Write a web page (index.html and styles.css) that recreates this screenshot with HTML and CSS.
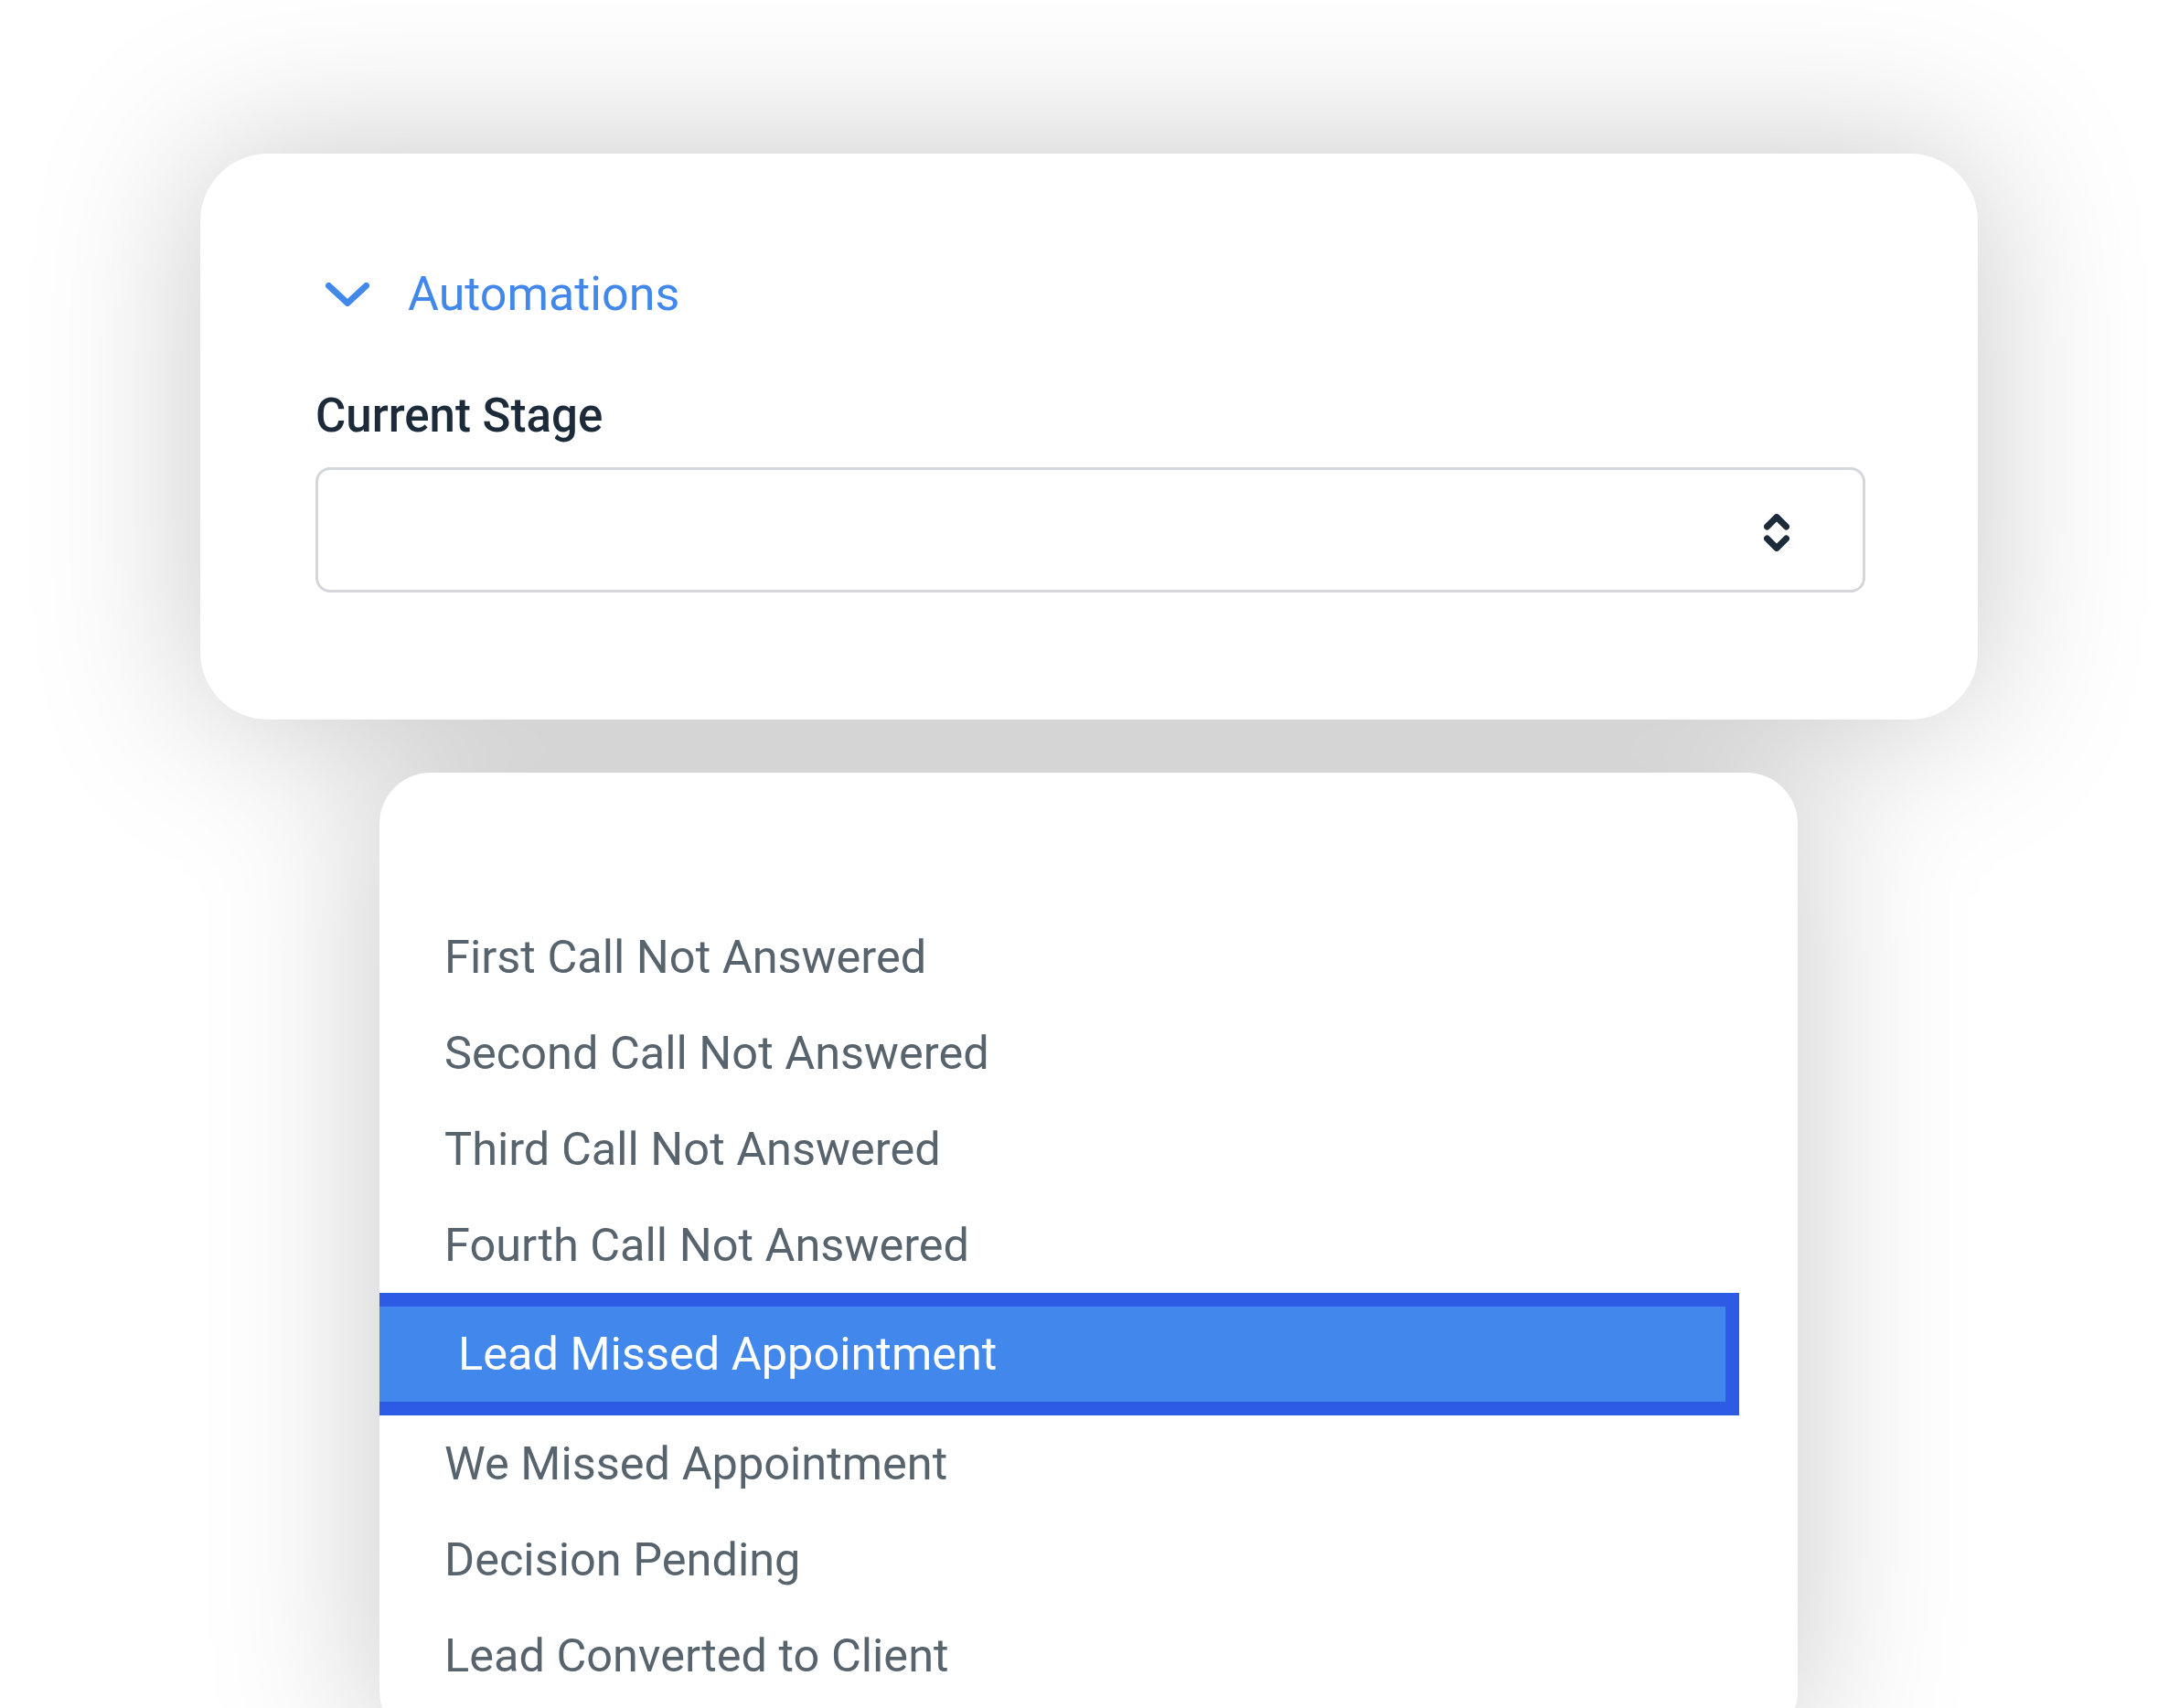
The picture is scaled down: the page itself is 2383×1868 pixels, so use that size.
FILE: index.html
```html
<!DOCTYPE html>
<html lang="en">
<head>
<meta charset="utf-8">
<title>Automations - Current Stage</title>
<link rel="stylesheet" href="styles.css">
</head>
<body>
<div class="stage">
  <section class="panel">
    <div class="panel-head">
      <svg class="chevron" width="48" height="26" viewBox="0 0 48 26" aria-hidden="true">
        <path d="M3.5 3.5 L24 22.5 L44.5 3.5" fill="none" stroke="#4287ec" stroke-width="7" stroke-linecap="round" stroke-linejoin="round"/>
      </svg>
      <span class="panel-title">Automations</span>
    </div>
    <label class="field-label">Current Stage</label>
    <div class="select">
      <svg class="updown" width="28" height="41" viewBox="0 0 28 41" aria-hidden="true">
        <path d="M3.5 14 L14 3.5 L24.5 14" fill="none" stroke="#1c2b3a" stroke-width="7" stroke-linecap="round" stroke-linejoin="round"/>
        <path d="M3.5 27 L14 37.5 L24.5 27" fill="none" stroke="#1c2b3a" stroke-width="7" stroke-linecap="round" stroke-linejoin="round"/>
      </svg>
    </div>
  </section>
  <ul class="menu">
    <li class="menu-item">First Call Not Answered</li>
    <li class="menu-item">Second Call Not Answered</li>
    <li class="menu-item">Third Call Not Answered</li>
    <li class="menu-item">Fourth Call Not Answered</li>
    <li class="menu-item is-active">Lead Missed Appointment</li>
    <li class="menu-item">We Missed Appointment</li>
    <li class="menu-item">Decision Pending</li>
    <li class="menu-item">Lead Converted to Client</li>
  </ul>
</div>
</body>
</html>
```

FILE: styles.css
```css
html {
  overflow: hidden;
  background: #ffffff;
}

body {
  margin: 0;
  padding: 0;
  background: #ffffff;
  font-family: Roboto, "Liberation Sans", Arial, sans-serif;
}

.stage {
  padding: 168px 0 0 219px;
  height: 1700px;
  filter: drop-shadow(0 0 90px rgba(0, 0, 0, 0.22));
}

.panel {
  box-sizing: border-box;
  width: 1944px;
  height: 619px;
  background: #ffffff;
  border-radius: 74px;
  padding: 124px 123px 0 126px;
}

.panel-head {
  display: flex;
  align-items: center;
  height: 60px;
  padding-left: 11px;
}

.chevron {
  display: block;
  flex: none;
}

.panel-title {
  margin-left: 42px;
  font-size: 52px;
  line-height: 60px;
  font-weight: 400;
  color: #4287ec;
}

.field-label {
  display: block;
  margin-top: 73px;
  font-size: 51px;
  line-height: 60px;
  font-weight: 500;
  color: #1c2b3a;
}

.select {
  box-sizing: border-box;
  margin-top: 26px;
  height: 137px;
  border: 3px solid #d3d6db;
  border-radius: 16px;
  display: flex;
  align-items: center;
  justify-content: flex-end;
  padding-right: 80px;
}

.updown {
  display: block;
  margin-top: 6px;
}

.menu {
  box-sizing: border-box;
  list-style: none;
  margin: 58px 0 0 196px;
  width: 1551px;
  height: 1060px;
  padding: 148.5px 0 0 0;
  background: #ffffff;
  border-radius: 56px;
  overflow: hidden;
}

.menu-item {
  height: 105px;
  line-height: 105px;
  padding-left: 71px;
  font-size: 50.5px;
  font-weight: 400;
  color: #57646e;
  white-space: nowrap;
}

.menu-item.is-active {
  width: 1487px;
  box-sizing: border-box;
  height: 134px;
  line-height: 104px;
  padding-left: 86px;
  background: #4287eb;
  border-top: 15px solid #2d5be4;
  border-bottom: 15px solid #2d5be4;
  border-right: 15px solid #2d5be4;
  color: #ffffff;
}
```
